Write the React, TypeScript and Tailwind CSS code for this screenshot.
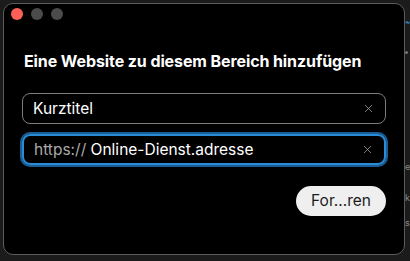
import { X } from "lucide-react";

const font = { fontFamily: "Inter, 'Liberation Sans', sans-serif" };

function TrafficLights() {
  return (
    <div className="flex gap-2 pl-[7px] pt-[4px]">
      <span className="w-3 h-3 rounded-full bg-[#fe5f57]" />
      <span className="w-3 h-3 rounded-full bg-[#4b4b4b]" />
      <span className="w-3 h-3 rounded-full bg-[#4b4b4b]" />
    </div>
  );
}

function Field({ value, prefix, focused }: { value: string; prefix?: string; focused?: boolean }) {
  return (
    <div
      className={`flex items-center h-[31px] rounded-[8px] pl-[10px] pr-[10px] ${
        focused
          ? "border-2 border-[#2a8bd6] ring-[2px] ring-[#1a5d95]"
          : "border border-[#7c7c7c]"
      }`}
    >
      <span className="flex-1 text-[15.5px] leading-normal text-white whitespace-nowrap">
        {prefix && <span className="text-[#a9a9a9]">{prefix}</span>}
        {value}
      </span>
      <X className="w-[13px] h-[13px] text-[#a6a6a6]" strokeWidth={1.4} />
    </div>
  );
}

export default function App() {
  return (
    <div className="w-[410px] h-[261px] bg-[#1b1b1b] flex overflow-hidden" style={font}>
      <div className="pl-[3px] pt-[3px]">
        <div className="w-[402px] h-[252px] rounded-[10px] border border-[#5c5c5c] bg-black flex flex-col">
          <TrafficLights />
          <h1 className="mt-[31px] pl-[20px] text-[16px] font-bold text-white leading-[20px] tracking-[-0.1px]">
            Eine Website zu diesem Bereich hinzufügen
          </h1>
          <div className="mt-[22px] pl-[18px] pr-[18px] flex flex-col gap-[10px]">
            <Field value="Kurztitel" />
            <Field prefix="https:// " value="Online-Dienst.adresse" focused />
          </div>
          <div className="mt-[21px] pr-[18px] flex justify-end">
            <button className="h-[30px] w-[90px] rounded-full bg-[#efefef] text-[#1c1c1c] text-[15.5px] leading-none">
              For...ren
            </button>
          </div>
        </div>
      </div>
      <div className="flex-1 flex flex-col items-start pt-[18px] text-[9px] leading-none text-[#8a8a8a]">
        <span className="text-[#3aa0e0] text-[8px]">~</span>
        <span className="mt-[25px] w-[3px] h-[3px] rounded-full bg-[#777]" />
        <span className="mt-[108px]">e</span>
        <span className="mt-[22px]">k</span>
        <span className="mt-[16px]">s</span>
      </div>
    </div>
  );
}
